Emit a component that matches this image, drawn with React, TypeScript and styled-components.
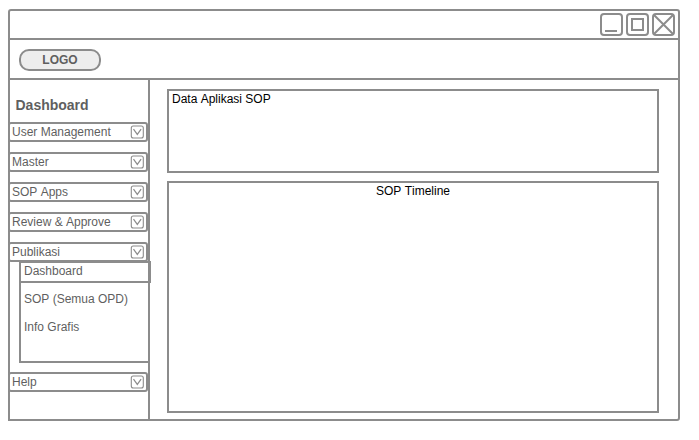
import React from "react";
import styled, { createGlobalStyle } from "styled-components";

const line = "#8c8c8c";
const ink = "#5f5f5f";

const GlobalStyle = createGlobalStyle`
  * { box-sizing: border-box; }
  body {
    margin: 0;
    background: #fff;
    font-family: "Liberation Sans", Arial, sans-serif;
    font-size: 12px;
    line-height: 14px;
    font-kerning: none;
    color: ${ink};
  }
`;

const Page = styled.div`
  padding: 9px 0 0 8px;
`;

const Window = styled.div`
  display: flex;
  flex-direction: column;
  width: 672px;
  height: 412px;
  border: 2px solid ${line};
  border-radius: 3px 3px 3px 0;
`;

const TitleBar = styled.div`
  display: flex;
  justify-content: flex-end;
  gap: 3px;
  height: 29px;
  padding: 2px 3px 0 0;
  border-bottom: 2px solid ${line};
`;

const ControlIcon = styled.svg`
  display: block;
  width: 23px;
  height: 23px;
  fill: none;
  stroke: ${line};
  stroke-width: 2;
`;

const Header = styled.header`
  height: 40px;
  padding: 9px;
  border-bottom: 2px solid ${line};
`;

const Logo = styled.div`
  display: flex;
  align-items: center;
  justify-content: center;
  width: 82px;
  height: 22px;
  border: 2px solid ${line};
  border-radius: 10px;
  background: #eee;
  font-weight: bold;
`;

const Body = styled.div`
  display: flex;
  flex: 1;
`;

const Sidebar = styled.nav`
  width: 140px;
  padding-top: 17px;
  border-right: 2px solid ${line};
`;

const SidebarTitle = styled.h1`
  margin: 0 0 8px;
  padding-left: 5.5px;
  font-size: 14px;
  line-height: 17px;
`;

const MenuItem = styled.div<{ $gap: number }>`
  display: flex;
  align-items: flex-start;
  justify-content: space-between;
  width: 140px;
  height: 20px;
  margin: 0 0 ${(p) => p.$gap}px -2px;
  padding: 1px 2px 0;
  border: 2px solid ${line};
  border-radius: 3px;
  background: #fff;
`;

const ToggleIcon = styled.svg`
  display: block;
  width: 14px;
  height: 14px;
  fill: none;
  stroke: ${line};
`;

const SubMenu = styled.div`
  width: 131px;
  height: 102px;
  margin: 0 0 9px 9px;
  border: 2px solid ${line};
  border-width: 0 0 2px 2px;
`;

const SubItem = styled.div<{ $selected?: boolean }>`
  height: ${(p) => (p.$selected ? 22 : 28)}px;
  width: ${(p) => (p.$selected ? 132 : 129)}px;
  margin-left: ${(p) => (p.$selected ? -2 : 0)}px;
  margin-bottom: ${(p) => (p.$selected ? 9 : 0)}px;
  padding: ${(p) => (p.$selected ? "1px 3px" : "0 3px")};
  border: ${(p) => (p.$selected ? `2px solid ${line}` : "none")};
`;

const Content = styled.main`
  display: flex;
  flex: 1;
  flex-direction: column;
  gap: 8px;
  padding: 9px 19px 6px 17px;
`;

const Panel = styled.section<{ $height: number; $centered?: boolean }>`
  height: ${(p) => p.$height}px;
  padding: 1px 3px;
  border: 2px solid ${line};
  color: #000;
  text-align: ${(p) => (p.$centered ? "center" : "left")};
`;

function Toggle() {
  return (
    <ToggleIcon viewBox="0 0 14 14">
      <rect x="1.3" y="1" width="12" height="12" rx="2" strokeWidth="1.1" />
      <path d="M3.5 4.2 L7.3 9.4 L11.1 4.2" strokeWidth="1.2" />
    </ToggleIcon>
  );
}

function Item({ label, gap = 10 }: { label: string; gap?: number }) {
  return (
    <MenuItem $gap={gap}>
      <span>{label}</span>
      <Toggle />
    </MenuItem>
  );
}

export default function App() {
  return (
    <Page>
      <GlobalStyle />
      <Window>
        <TitleBar>
          <ControlIcon viewBox="0 0 23 23">
            <rect x="1" y="1" width="21" height="21" rx="3" />
            <path d="M5 18H17" />
          </ControlIcon>
          <ControlIcon viewBox="0 0 23 23">
            <rect x="1" y="1" width="21" height="21" rx="3" />
            <rect x="6" y="6" width="11" height="11" />
          </ControlIcon>
          <ControlIcon viewBox="0 0 23 23">
            <rect x="1" y="1" width="21" height="21" rx="3" />
            <path d="M1.5 1.5L21.5 21.5M21.5 1.5L1.5 21.5" />
          </ControlIcon>
        </TitleBar>
        <Header>
          <Logo>LOGO</Logo>
        </Header>
        <Body>
          <Sidebar>
            <SidebarTitle>Dashboard</SidebarTitle>
            <Item label="User Management" />
            <Item label="Master" />
            <Item label="SOP Apps" />
            <Item label="Review &amp; Approve" />
            <Item label="Publikasi" gap={-1} />
            <SubMenu>
              <SubItem $selected>Dashboard</SubItem>
              <SubItem>SOP (Semua OPD)</SubItem>
              <SubItem>Info Grafis</SubItem>
            </SubMenu>
            <Item label="Help" />
          </Sidebar>
          <Content>
            <Panel $height={84}>Data Aplikasi SOP</Panel>
            <Panel $height={232} $centered>
              SOP Timeline
            </Panel>
          </Content>
        </Body>
      </Window>
    </Page>
  );
}
